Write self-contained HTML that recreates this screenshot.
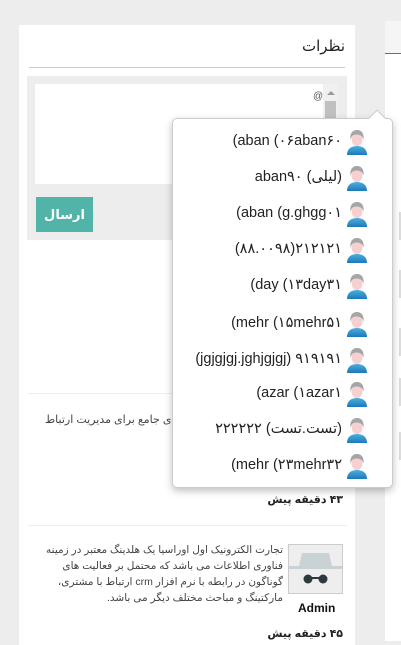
<!DOCTYPE html>
<html><head><meta charset="utf-8"><style>
*{margin:0;padding:0;box-sizing:border-box}
body{width:401px;height:636px;background:#ededed;position:relative;overflow:hidden;font-family:"Liberation Sans","DejaVu Sans",sans-serif;direction:rtl}
.a{position:absolute}
.panel{left:19px;top:25px;width:336px;height:620px;background:#fff}
.rp{left:385px;top:21px;width:20px;height:620px;background:#fff}
.t{white-space:nowrap;color:#333}
.dd{left:172px;top:118px;width:221px;height:370px;background:#fff;border:1px solid #ccc;border-radius:5px;box-shadow:0 3px 8px rgba(0,0,0,.25)}
.item{position:absolute;right:0;width:219px;height:36px}
.item .n{position:absolute;right:50px;top:8px;font-size:14.5px;color:#222;white-space:nowrap;direction:ltr;text-align:right}
.item svg{position:absolute;right:24px;top:3px}
.small{font-size:11px;color:#444}
</style></head><body>
<div class="a rp"></div>
<div class="a" style="left:385px;top:21px;width:20px;height:32px;background:#f5f5f5"></div>
<div class="a" style="left:385px;top:53px;width:20px;height:1px;background:#3b78c0"></div>
<div class="a" style="left:399px;top:212px;width:2px;height:28px;background:#ddd"></div>
<div class="a" style="left:399px;top:270px;width:2px;height:28px;background:#ddd"></div>
<div class="a" style="left:399px;top:328px;width:2px;height:28px;background:#ddd"></div>
<div class="a" style="left:399px;top:378px;width:2px;height:28px;background:#ddd"></div>
<div class="a" style="left:399px;top:432px;width:2px;height:28px;background:#ddd"></div>

<div class="a panel"></div>
<div class="a t" style="right:56px;top:37px;font-size:15px;color:#222">نظرات</div>
<div class="a" style="left:29px;top:67px;width:316px;height:1px;background:#ccc"></div>
<div class="a" style="left:27px;top:76px;width:320px;height:164px;background:#ededed"></div>
<div class="a" style="left:35px;top:84px;width:303px;height:100px;background:#fff"></div>
<div class="a" style="left:323px;top:84px;width:15px;height:100px;background:#f0f0f0"></div>
<div class="a" style="left:325px;top:101px;width:11px;height:20px;background:#c0c0c0"></div>
<div class="a" style="left:327px;top:91px;width:0;height:0;border-left:4px solid transparent;border-right:4px solid transparent;border-bottom:4px solid #999"></div>
<div class="a t" style="left:313px;top:91px;font-size:10px;color:#555">@</div>
<div class="a" style="left:36px;top:197px;width:57px;height:35px;background:#52b3a8;color:#fff;font-weight:bold;font-size:13px;text-align:center;line-height:35px">ارسال</div>

<div class="a" style="left:28px;top:393px;width:319px;height:1px;background:#eee"></div>
<div class="a t small" style="left:45px;top:413px">کارهای جامع برای مدیریت ارتباط</div>
<div class="a t" style="right:58px;top:493px;font-size:11px;font-weight:bold;color:#222">۴۳ دقیقه پیش</div>
<div class="a" style="left:28px;top:525px;width:319px;height:1px;background:#eee"></div>
<div class="a" style="left:288px;top:544px;width:55px;height:50px;background:#eee;border:1px solid #ccc"></div>
<svg class="a" style="left:288px;top:544px" width="55" height="50"><path d="M14 9h27l3 13h10v3H1v-3h10z" fill="#c9d3d6"/><circle cx="20" cy="35" r="4.5" fill="#2d3a3d"/><circle cx="35" cy="35" r="4.5" fill="#2d3a3d"/><path d="M20 34h15" stroke="#2d3a3d" stroke-width="2"/></svg>
<div class="a" style="right:118px;top:542px;width:250px;line-height:16px;text-align:right;color:#444;font-size:10.5px">تجارت الکترونیک اول اوراسیا یک هلدینگ معتبر در زمینه فناوری اطلاعات می باشد که محتمل بر فعالیت های گوناگون در رابطه با نرم افزار crm ارتباط با مشتری، مارکتینگ و مباحث مختلف دیگر می باشد.</div>
<div class="a t" style="left:298px;top:601px;font-size:12px;font-weight:bold;color:#111">Admin</div>
<div class="a t" style="right:58px;top:627px;font-size:11px;font-weight:bold;color:#222">۴۵ دقیقه پیش</div>

<div class="a" style="left:371px;top:112px;width:12px;height:12px;background:#fff;border-left:1px solid #ccc;border-top:1px solid #ccc;transform:rotate(45deg);z-index:2"></div>
<div class="a dd" style="z-index:1">
<div id="items"></div>
</div>
<script>
var names=["(aban (۰۶aban۶۰","aban۹۰ (لیلی)","(aban (g.ghgg۰۱","(۸۸.۰۰۹۸)۲۱۲۱۲۱","(day (۱۳day۳۱","(mehr (۱۵mehr۵۱","(jgjgjgj.jghjgjgj) ۹۱۹۱۹۱","(azar (۱azar۱","۲۲۲۲۲۲ (تست.تست)","(mehr (۲۳mehr۳۲"];
var tops=[6,42,78,114,150,188,224,258,294,330];
var av='<svg width="22" height="28" viewBox="0 0 22 28"><defs><linearGradient id="g" x1="0" y1="0" x2="0" y2="1"><stop offset="0" stop-color="#4fb0e0"/><stop offset="1" stop-color="#1a78b8"/></linearGradient></defs><path d="M1 27c0-6 4-9 10-9s10 3 10 9z" fill="url(#g)"/><ellipse cx="11" cy="11.5" rx="5.5" ry="6.5" fill="#f6d0d0"/><path d="M4.5 12c-1-7 2.5-10 6.5-10s7.5 3 6.5 10c-.5-3-2-5-6.5-5.5S5 9 4.5 12z" fill="#a5a5a5"/></svg>';
var h='';for(var i=0;i<10;i++)h+='<div class="item" style="top:'+tops[i]+'px"><span class="n">'+names[i]+'</span>'+av+'</div>';
document.getElementById('items').innerHTML=h;
</script>
</body></html>
